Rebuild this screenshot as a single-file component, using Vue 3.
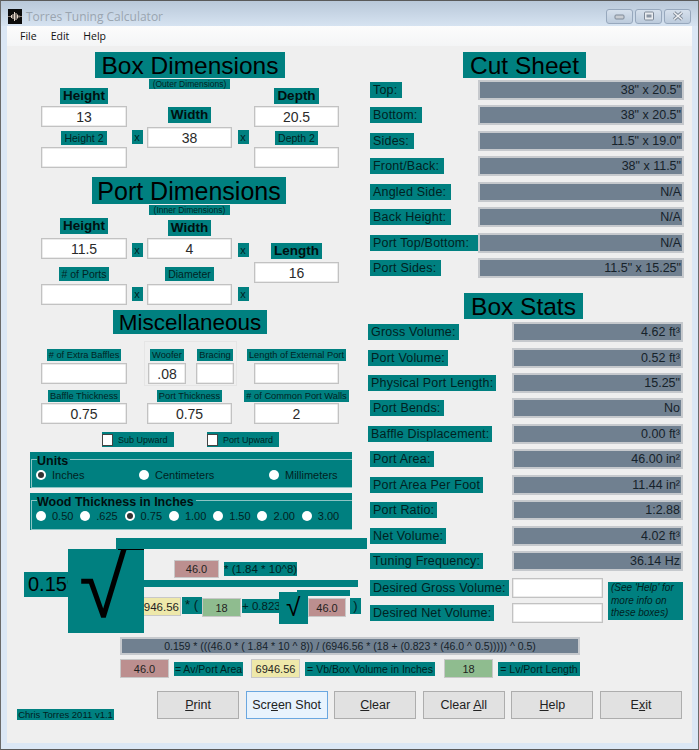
<script setup>
const cutRows = [
  ['Top:', '38" x 20.5"'],
  ['Bottom:', '38" x 20.5"'],
  ['Sides:', '11.5" x 19.0"'],
  ['Front/Back:', '38" x 11.5"'],
  ['Angled Side:', 'N/A'],
  ['Back Height:', 'N/A'],
  ['Port Top/Bottom:', 'N/A'],
  ['Port Sides:', '11.5" x 15.25"'],
]
const statRows = [
  ['Gross Volume:', '4.62 ft³', true],
  ['Port Volume:', '0.52 ft³', true],
  ['Physical Port Length:', '15.25"', true],
  ['Port Bends:', 'No', false],
  ['Baffle Displacement:', '0.00 ft³', true],
  ['Port Area:', '46.00 in²', false],
  ['Port Area Per Foot', '11.44 in²', false],
  ['Port Ratio:', '1:2.88', false],
  ['Net Volume:', '4.02 ft³', false],
  ['Tuning Frequency:', '36.14 Hz', false],
]
const woods = ['0.50', '.625', '0.75', '1.00', '1.50', '2.00', '3.00']
</script>

<template>
  <div class="window">
    <header class="titlebar">
      <svg class="appicon" viewBox="0 0 14 15" width="14" height="15">
        <rect width="14" height="15" fill="#0c0c0c" />
        <path d="M0 7.5h3" stroke="#8a7a70" stroke-width="1" fill="none" />
        <path d="M3.5 6v3M5 5v5M6.5 3v9M8 4v7M9.5 5.5v4M11 6.5v2" stroke="#e6d6ca" stroke-width="1" fill="none" />
        <path d="M11 7.5h3" stroke="#8a7a70" stroke-width="1" fill="none" />
      </svg>
      <span class="apptitle">Torres Tuning Calculator</span>
      <div class="winbtns">
        <span class="wbtn">
          <svg viewBox="0 0 12 8" width="12" height="8"><rect x="1" y="3" width="9" height="4" rx="1" fill="#c8ccd2" stroke="#7f8a98" /></svg>
        </span>
        <span class="wbtn">
          <svg viewBox="0 0 12 10" width="12" height="10"><rect x="1.5" y="1" width="9" height="8" rx="1" fill="#e8ebef" stroke="#7f8a98" /><rect x="3.5" y="3.5" width="5" height="3" fill="#8a95a3" /></svg>
        </span>
        <span class="wbtn">
          <svg viewBox="0 0 12 10" width="12" height="10"><path d="M2 1.5l8 7M10 1.5l-8 7" stroke="#7f8a98" stroke-width="3.4" /><path d="M2 1.5l8 7M10 1.5l-8 7" stroke="#eef0f3" stroke-width="1.6" /></svg>
        </span>
      </div>
    </header>

    <div class="client">
      <nav class="menu">
        <span>File</span><span>Edit</span><span>Help</span>
      </nav>

      <div class="form">
        <div class="columns">
          <section class="left">
            <h1 class="heading box-head">Box Dimensions</h1>
            <p class="sub">(Outer Dimensions)</p>
            <div class="dims box-dims">
              <div class="col">
                <span class="bold-label">Height</span>
                <input class="inp mt2" readonly value="13" />
                <span class="small-label mt4">Height 2</span>
                <input class="inp mt2" readonly value="" />
              </div>
              <div class="xcol pad42"><span class="xbox">x</span></div>
              <div class="col pad19">
                <span class="bold-label">Width</span>
                <input class="inp mt4" readonly value="38" />
              </div>
              <div class="xcol xwide pad42"><span class="xbox">x</span></div>
              <div class="col">
                <span class="bold-label">Depth</span>
                <input class="inp mt2" readonly value="20.5" />
                <span class="small-label mt4">Depth 2</span>
                <input class="inp mt2" readonly value="" />
              </div>
            </div>

            <h1 class="heading port-head">Port Dimensions</h1>
            <p class="sub">(Inner Dimensions)</p>
            <div class="dims port-dims">
              <div class="col">
                <span class="bold-label">Height</span>
                <input class="inp mt4" readonly value="11.5" />
                <span class="small-label mt8">&#35; of Ports</span>
                <input class="inp mt3" readonly value="" />
              </div>
              <div class="xcol pad25">
                <span class="xbox">x</span>
                <span class="xbox mt30">x</span>
              </div>
              <div class="col pad2">
                <span class="bold-label">Width</span>
                <input class="inp mt2" readonly value="4" />
                <span class="small-label mt8">Diameter</span>
                <input class="inp mt3" readonly value="" />
              </div>
              <div class="xcol xwide pad25">
                <span class="xbox">x</span>
                <span class="xbox mt30">x</span>
              </div>
              <div class="col pad25">
                <span class="bold-label">Length</span>
                <input class="inp mt3" readonly value="16" />
              </div>
            </div>

            <h1 class="heading misc-head">Miscellaneous</h1>
            <div class="dims misc-row">
              <div class="col pad8">
                <span class="tiny-label">&#35; of Extra Baffles</span>
                <input class="inp mt2" readonly value="" />
              </div>
              <div class="woofer-group">
                <div class="mini">
                  <span class="tiny-label">Woofer</span>
                  <input class="inp mt2" readonly value=".08" />
                </div>
                <div class="mini">
                  <span class="tiny-label">Bracing</span>
                  <input class="inp mt2" readonly value="" />
                </div>
              </div>
              <div class="col pad8">
                <span class="tiny-label">Length of External Port</span>
                <input class="inp mt2" readonly value="" />
              </div>
            </div>
            <div class="dims thick-row">
              <div class="col">
                <span class="tiny-label">Baffle Thickness</span>
                <input class="inp mt1" readonly value="0.75" />
              </div>
              <div class="xcol"></div>
              <div class="col">
                <span class="tiny-label">Port Thickness</span>
                <input class="inp mt1" readonly value="0.75" />
              </div>
              <div class="xcol xwide"></div>
              <div class="col">
                <span class="tiny-label">&#35; of Common Port Walls</span>
                <input class="inp mt1" readonly value="2" />
              </div>
            </div>
            <div class="checks">
              <label class="check"><span class="box"></span>Sub Upward</label>
              <label class="check"><span class="box"></span>Port Upward</label>
            </div>

            <div class="group units">
              <div class="legend"><span>Units</span></div>
              <div class="frame">
                <div class="unit-grid">
                  <span class="radio-item"><span class="radio on"></span>Inches</span>
                  <span class="radio-item"><span class="radio"></span>Centimeters</span>
                  <span class="radio-item"><span class="radio"></span>Millimeters</span>
                </div>
              </div>
            </div>
            <div class="group wood">
              <div class="legend"><span>Wood Thickness in Inches</span></div>
              <div class="frame">
                <div class="wood-grid">
                  <span v-for="w in woods" :key="w" class="radio-item">
                    <span class="radio" :class="{ on: w === '0.75' }"></span>{{ w }}
                  </span>
                </div>
              </div>
            </div>

            <div class="radical">
              <span class="coef">0.159</span>
              <div class="root"><span class="root-sign">√</span></div>
              <div class="under">
                <div class="topbar"></div>
                <div class="numer">
                  <span class="chip rose num-chip">46.0</span>
                  <span class="fl num-label">* (1.84 * 10^8)</span>
                </div>
                <div class="midbar"></div>
                <div class="denom">
                  <span class="chip yellow clip"><span>6946.56</span></span>
                  <span class="fl paren">* (</span>
                  <span class="chip green len">18</span>
                  <span class="fl plus">+ 0.823</span>
                  <div class="small-root"><span class="small-sign">√</span></div>
                  <div class="small-under">
                    <div class="small-bar"></div>
                    <div class="small-line">
                      <span class="chip rose small-chip">46.0</span>
                      <span class="fl close">)</span>
                    </div>
                  </div>
                </div>
              </div>
            </div>
          </section>

          <section class="right">
            <h1 class="heading cut-head">Cut Sheet</h1>
            <div class="rows cut-rows">
              <div v-for="r in cutRows" :key="r[0]" class="row">
                <span class="row-label">{{ r[0] }}</span>
                <span class="field cut-field">{{ r[1] }}</span>
              </div>
            </div>
            <h1 class="heading stats-head">Box Stats</h1>
            <div class="rows stat-rows">
              <div v-for="r in statRows" :key="r[0]" class="row" :class="{ out: r[2] }">
                <span class="row-label">{{ r[0] }}</span>
                <span class="field stat-field">{{ r[1] }}</span>
              </div>
            </div>
            <div class="desired">
              <div class="desired-rows">
                <div class="desired-row">
                  <span class="row-label">Desired Gross Volume:</span>
                  <input class="inp" readonly value="" />
                </div>
                <div class="desired-row">
                  <span class="row-label">Desired Net Volume:</span>
                  <input class="inp" readonly value="" />
                </div>
              </div>
              <p class="note">(See 'Help' for more info on these boxes)</p>
            </div>
          </section>
        </div>

        <div class="formula">0.159 * (((46.0 * ( 1.84 * 10 ^ 8)) / (6946.56 * (18 + (0.823 * (46.0 ^ 0.5))))) ^ 0.5)</div>
        <div class="legend-row">
          <span class="chip rose leg-chip">46.0</span>
          <span class="fl leg1">= Av/Port Area</span>
          <span class="chip yellow leg-chip">6946.56</span>
          <span class="fl leg2">= Vb/Box Volume in Inches</span>
          <span class="chip green leg-chip">18</span>
          <span class="fl leg3">= Lv/Port Length</span>
        </div>

        <footer class="footer">
          <span class="fl credit">Chris Torres 2011 v1.1</span>
          <div class="buttons">
            <button class="btn"><u>P</u>rint</button>
            <button class="btn focus">Scr<u>e</u>en Shot</button>
            <button class="btn"><u>C</u>lear</button>
            <button class="btn">Clear <u>A</u>ll</button>
            <button class="btn"><u>H</u>elp</button>
            <button class="btn">E<u>x</u>it</button>
          </div>
        </footer>
      </div>
    </div>
  </div>
</template>

<style>
html, body { margin: 0; padding: 0; background: #dbe7f5; }
</style>

<style scoped>
.window {
  box-sizing: border-box;
  width: 699px;
  height: 750px;
  overflow: hidden;
  background: #dbe7f5;
  border-top: 1px solid #5a5a5a;
  border-left: 1px solid #6a6a6a;
  border-right: 1px solid #6a6a6a;
  border-bottom: 1px solid #5a5a5a;
  font-family: "Liberation Sans", Arial, sans-serif;
  color: #002424;
}
.titlebar {
  height: 25px;
  display: flex;
  align-items: center;
  padding: 5px 7px 0 7px;
  box-sizing: border-box;
  background: linear-gradient(#b9c8d9, #d6e3f1);
}
.appicon { flex: none; }
.apptitle {
  margin-left: 4px;
  font: 12px "Open Sans", "Noto Sans", sans-serif;
  color: #9aa5b0;
  white-space: nowrap;
}
.winbtns { margin-left: auto; display: flex; gap: 2px; }
.wbtn {
  box-sizing: border-box;
  width: 27px;
  height: 15px;
  display: flex;
  align-items: center;
  justify-content: center;
  border: 1px solid #97a8bd;
  border-radius: 3px;
  background: linear-gradient(#d6e0ec, #bccbdc);
}
.client {
  margin-left: 6px;
  width: 685px;
  height: 717px;
  background: #efefef;
}
.menu {
  height: 20px;
  box-sizing: border-box;
  background: linear-gradient(#fcfcfc, #f4f5f6);
  display: flex;
  align-items: center;
  gap: 14px;
  padding-left: 13px;
  font: 10.5px "Open Sans", "Noto Sans", sans-serif;
  color: #111;
}
.form { padding-top: 6px; }
.columns { display: flex; height: 581px; }
.left { width: 356px; padding-left: 5px; flex: none; }
.right { width: 316px; flex: none; display: flex; flex-direction: column; }

.heading {
  margin: 0;
  box-sizing: border-box;
  background: #008080;
  color: #000;
  font-weight: 400;
  text-align: center;
  white-space: nowrap;
  font-size: 24.5px;
  padding-top: 1px;
}
.box-head { width: 190px; height: 26px; line-height: 26px; margin-left: 83px; }
.port-head { width: 194px; height: 27px; line-height: 27px; margin-left: 80px; margin-top: 9px; font-size: 25px; }
.misc-head { width: 154px; height: 24px; line-height: 24px; margin-left: 101px; margin-top: 5px; font-size: 22.5px; }
.cut-head { width: 123px; height: 26px; line-height: 26px; margin-left: 95px; }
.stats-head { width: 119px; height: 26px; line-height: 26px; margin-left: 96px; margin-top: 15px; }

.sub {
  margin: 1px 0 0 137px;
  width: 81px;
  height: 10px;
  background: #008080;
  font-size: 8.5px;
  line-height: 10px;
  text-align: center;
  white-space: nowrap;
}
.dims { display: flex; align-items: flex-start; padding-left: 29px; }
.box-dims { margin-top: -1px; }
.port-dims { margin-top: 3px; }
.misc-row { margin-top: 7px; }
.thick-row { margin-top: 4px; }

.col { width: 85px; display: flex; flex-direction: column; align-items: center; flex: none; }
.col:first-child { width: 86px; }
.xcol { width: 20px; flex: none; display: flex; flex-direction: column; align-items: center; }
.xwide { width: 22px; }
.pad2 { padding-top: 2px; }
.pad8 { padding-top: 8px; }
.pad19 { padding-top: 19px; }
.pad25 { padding-top: 25px; }
.pad42 { padding-top: 42px; }
.mt1 { margin-top: 1px; }
.mt2 { margin-top: 2px; }
.mt3 { margin-top: 3px; }
.mt4 { margin-top: 4px; }
.mt8 { margin-top: 8px; }
.mt30 { margin-top: 30px; }

.bold-label {
  background: #008080;
  font-weight: 700;
  font-size: 13.5px;
  line-height: 16px;
  height: 16px;
  padding: 0 3px;
  color: #001010;
  white-space: nowrap;
}
.small-label {
  background: #008080;
  font-size: 10.5px;
  line-height: 14px;
  height: 14px;
  padding: 0 3px;
  white-space: nowrap;
}
.tiny-label {
  background: #008080;
  font-size: 9.3px;
  line-height: 12px;
  height: 12px;
  padding: 0 2px;
  white-space: nowrap;
}
.xbox {
  width: 11px;
  height: 14px;
  background: #008080;
  font-size: 11px;
  line-height: 14px;
  text-align: center;
}
.inp {
  display: block;
  box-sizing: border-box;
  width: 100%;
  height: 21px;
  padding: 0;
  background: #fff;
  border: 1px solid #c2c2c2;
  box-shadow: inset 0 0 0 0.5px #d8d8d8;
  border-radius: 0;
  outline: none;
  font: 14px "Liberation Sans", Arial, sans-serif;
  color: #2a2a2a;
  text-align: center;
}

.woofer-group {
  box-sizing: border-box;
  flex: none;
  width: 93px;
  height: 45px;
  margin: 0 17px;
  padding: 7px 3px 0;
  border: 1px solid #e5e5e5;
  display: flex;
  gap: 10px;
}
.mini { width: 38px; display: flex; flex-direction: column; align-items: center; flex: none; }

.checks { display: flex; margin: 8px 0 0 90px; gap: 33px; }
.check {
  display: flex;
  align-items: center;
  background: #008080;
  height: 15px;
  width: 72px;
  font-size: 9px;
  white-space: nowrap;
}
.box {
  box-sizing: border-box;
  width: 11px;
  height: 12px;
  margin-right: 5px;
  background: #fff;
  border: 1px solid #444;
  flex: none;
}

.group {
  box-sizing: border-box;
  width: 322px;
  margin: 5px 0 0 18px;
  background: #008080;
  padding-top: 7px;
}
.units { height: 36px; }
.wood { height: 37px; }
.frame {
  box-sizing: border-box;
  height: 100%;
  margin: 0 0 0 1px;
  border: 1px solid #8cc4c4;
  border-right: 0;
  padding-left: 4px;
  padding-top: 8px;
}
.legend {
  height: 0;
  padding-left: 7px;
  font-weight: 700;
  font-size: 12.5px;
  line-height: 13px;
  color: #001010;
}
.legend span {
  display: inline-block;
  position: relative;
  top: -4px;
  background: #008080;
  padding-right: 2px;
}
.unit-grid, .wood-grid { display: grid; font-size: 11px; color: #001f1f; }
.unit-grid { grid-template-columns: 103px 130px auto; }
.wood-grid { grid-template-columns: repeat(7, 44.3px); }
.radio-item { display: flex; align-items: center; height: 14px; white-space: nowrap; }
.radio {
  position: relative;
  box-sizing: border-box;
  width: 10px;
  height: 10px;
  margin-right: 6px;
  border-radius: 50%;
  background: #fff;
  flex: none;
}
.radio.on::after {
  content: "";
  position: absolute;
  left: 2px;
  top: 2px;
  width: 6px;
  height: 6px;
  border-radius: 50%;
  background: #333;
}

.radical { display: flex; align-items: flex-start; margin: 8px 0 0 12px; }
.coef {
  width: 44px;
  height: 25px;
  margin-top: 34px;
  background: #008080;
  overflow: hidden;
  font-size: 20px;
  line-height: 25px;
  padding-left: 4px;
  box-sizing: border-box;
  color: #000;
  white-space: nowrap;
  flex: none;
}
.root {
  flex: none;
  width: 76px;
  height: 84px;
  margin-top: 11px;
  background: #008080;
  position: relative;
  overflow: hidden;
}
.root::after {
  content: "";
  position: absolute;
  left: 50px;
  top: 0;
  width: 26px;
  height: 1px;
  background: #000;
}
.root-sign {
  display: block;
  font-size: 88px;
  line-height: 76px;
  padding-left: 11px;
  color: #000;
}
.under { display: flex; flex-direction: column; flex: none; width: 224px; }
.topbar { margin-left: -28px; width: 251px; height: 11px; background: #008080; }
.numer { display: flex; align-items: flex-start; margin-top: 11px; padding-left: 30px; height: 18px; }
.chip {
  box-sizing: border-box;
  display: flex;
  align-items: center;
  justify-content: center;
  border: 1px solid #c8c8c8;
  font-size: 11px;
  color: #1f1f1f;
  flex: none;
}
.rose { background: #bc8f8f; }
.yellow { background: #eee8aa; }
.green { background: #8fbc8f; }
.fl {
  background: #008080;
  font-size: 11.5px;
  line-height: 14px;
  white-space: nowrap;
  flex: none;
  color: #002222;
}
.num-chip { width: 45px; height: 18px; }
.num-label { margin-left: 5px; margin-top: 2px; width: 73px; text-align: center; }
.midbar { margin-top: 2px; width: 214px; height: 7px; background: #008080; }
.denom { display: flex; align-items: flex-start; margin-top: 3px; }
.clip {
  width: 37px;
  height: 19px;
  margin-top: 7px;
  overflow: hidden;
  justify-content: flex-end;
  border-left: 0;
  padding-right: 1px;
  font-size: 11.5px;
}
.paren { margin: 7px 0 0 1px; width: 20px; height: 17px; line-height: 15px; font-size: 13px; padding-left: 3px; box-sizing: border-box; }
.len { width: 39px; height: 19px; margin-top: 8px; }
.plus { margin: 9px 0 0 1px; width: 37px; text-align: center; }
.small-root {
  flex: none;
  width: 29px;
  height: 32px;
  margin-top: 2px;
  background: #008080;
  overflow: hidden;
  text-align: center;
}
.small-sign { display: block; font-size: 27px; line-height: 30px; color: #000; }
.small-under { flex: none; display: flex; flex-direction: column; }
.small-bar { margin-left: -11px; width: 53px; height: 6px; background: #008080; }
.small-line { display: flex; align-items: flex-start; margin-top: 2px; }
.small-chip { width: 38px; height: 19px; }
.close { margin-left: 4px; width: 11px; height: 16px; line-height: 16px; text-align: center; font-size: 13px; }

.rows { display: flex; flex-direction: column; gap: 5.45px; }
.cut-rows { margin-top: 2px; }
.stat-rows { margin-top: 3px; }
.row { display: flex; align-items: center; height: 20px; padding-left: 2px; }
.row.out { padding-left: 0; }
.row-label {
  background: #008080;
  font-size: 12.5px;
  line-height: 16px;
  height: 16px;
  padding: 0 3px;
  white-space: nowrap;
  letter-spacing: 0.2px;
  color: #002222;
  flex: none;
}
.cut-rows .row-label { padding-right: 5px; }
.cut-rows .row:nth-child(7) .row-label { flex: 1; }
.field {
  box-sizing: border-box;
  margin-left: auto;
  height: 20px;
  background: #708090;
  border: 2px solid #c6c9cd;
  font-size: 12.5px;
  line-height: 16px;
  text-align: right;
  padding-right: 1px;
  color: #16222a;
  flex: none;
}
.cut-field { width: 206px; }
.stat-field { width: 171px; margin-right: 1px; }
.desired { display: flex; align-items: flex-start; margin-top: 7px; padding-left: 2px; }
.desired-rows { display: flex; flex-direction: column; gap: 5px; width: 233px; flex: none; }
.desired-row { display: flex; align-items: center; justify-content: space-between; height: 20px; }
.desired-row .inp { width: 91px; height: 20px; }
.note {
  margin: 4px 0 0 5px;
  width: 75px;
  height: 38px;
  background: #008080;
  font-size: 10px;
  line-height: 12.5px;
  font-style: italic;
  box-sizing: border-box;
  padding: 0 3px;
  color: #002222;
}
.formula {
  box-sizing: border-box;
  margin: 4px 0 0 113px;
  width: 460px;
  height: 18px;
  background: #708090;
  border: 2px solid #c6c9cd;
  font-size: 10.5px;
  line-height: 14px;
  text-align: center;
  color: #16222a;
}
.legend-row { display: flex; align-items: center; margin: 4px 0 0 113px; }
.leg-chip { width: 49px; height: 19px; }
.leg1 { margin: 0 8px 0 5px; width: 69px; text-align: center; font-size: 10.5px; }
.leg2 { margin: 0 9px 0 5px; width: 130px; text-align: center; font-size: 10.5px; }
.leg3 { margin-left: 5px; width: 82px; text-align: center; font-size: 10.5px; }
.footer { display: flex; align-items: flex-start; margin-top: 13px; padding: 0 10px 0 10px; }
.credit {
  margin-top: 18px;
  width: 97px;
  height: 11px;
  line-height: 11px;
  font-size: 9.5px;
  text-align: center;
}
.buttons {
  margin-left: auto;
  display: grid;
  grid-template-columns: repeat(6, 82px);
  column-gap: 6.6px;
}
.btn {
  box-sizing: border-box;
  height: 28px;
  padding: 0;
  background: #e1e1e1;
  border: 1px solid #adadad;
  font: 12.5px "Liberation Sans", Arial, sans-serif;
  color: #222;
}
.btn.focus { background: #e8f3fd; border-color: #6aa7e0; }
</style>
